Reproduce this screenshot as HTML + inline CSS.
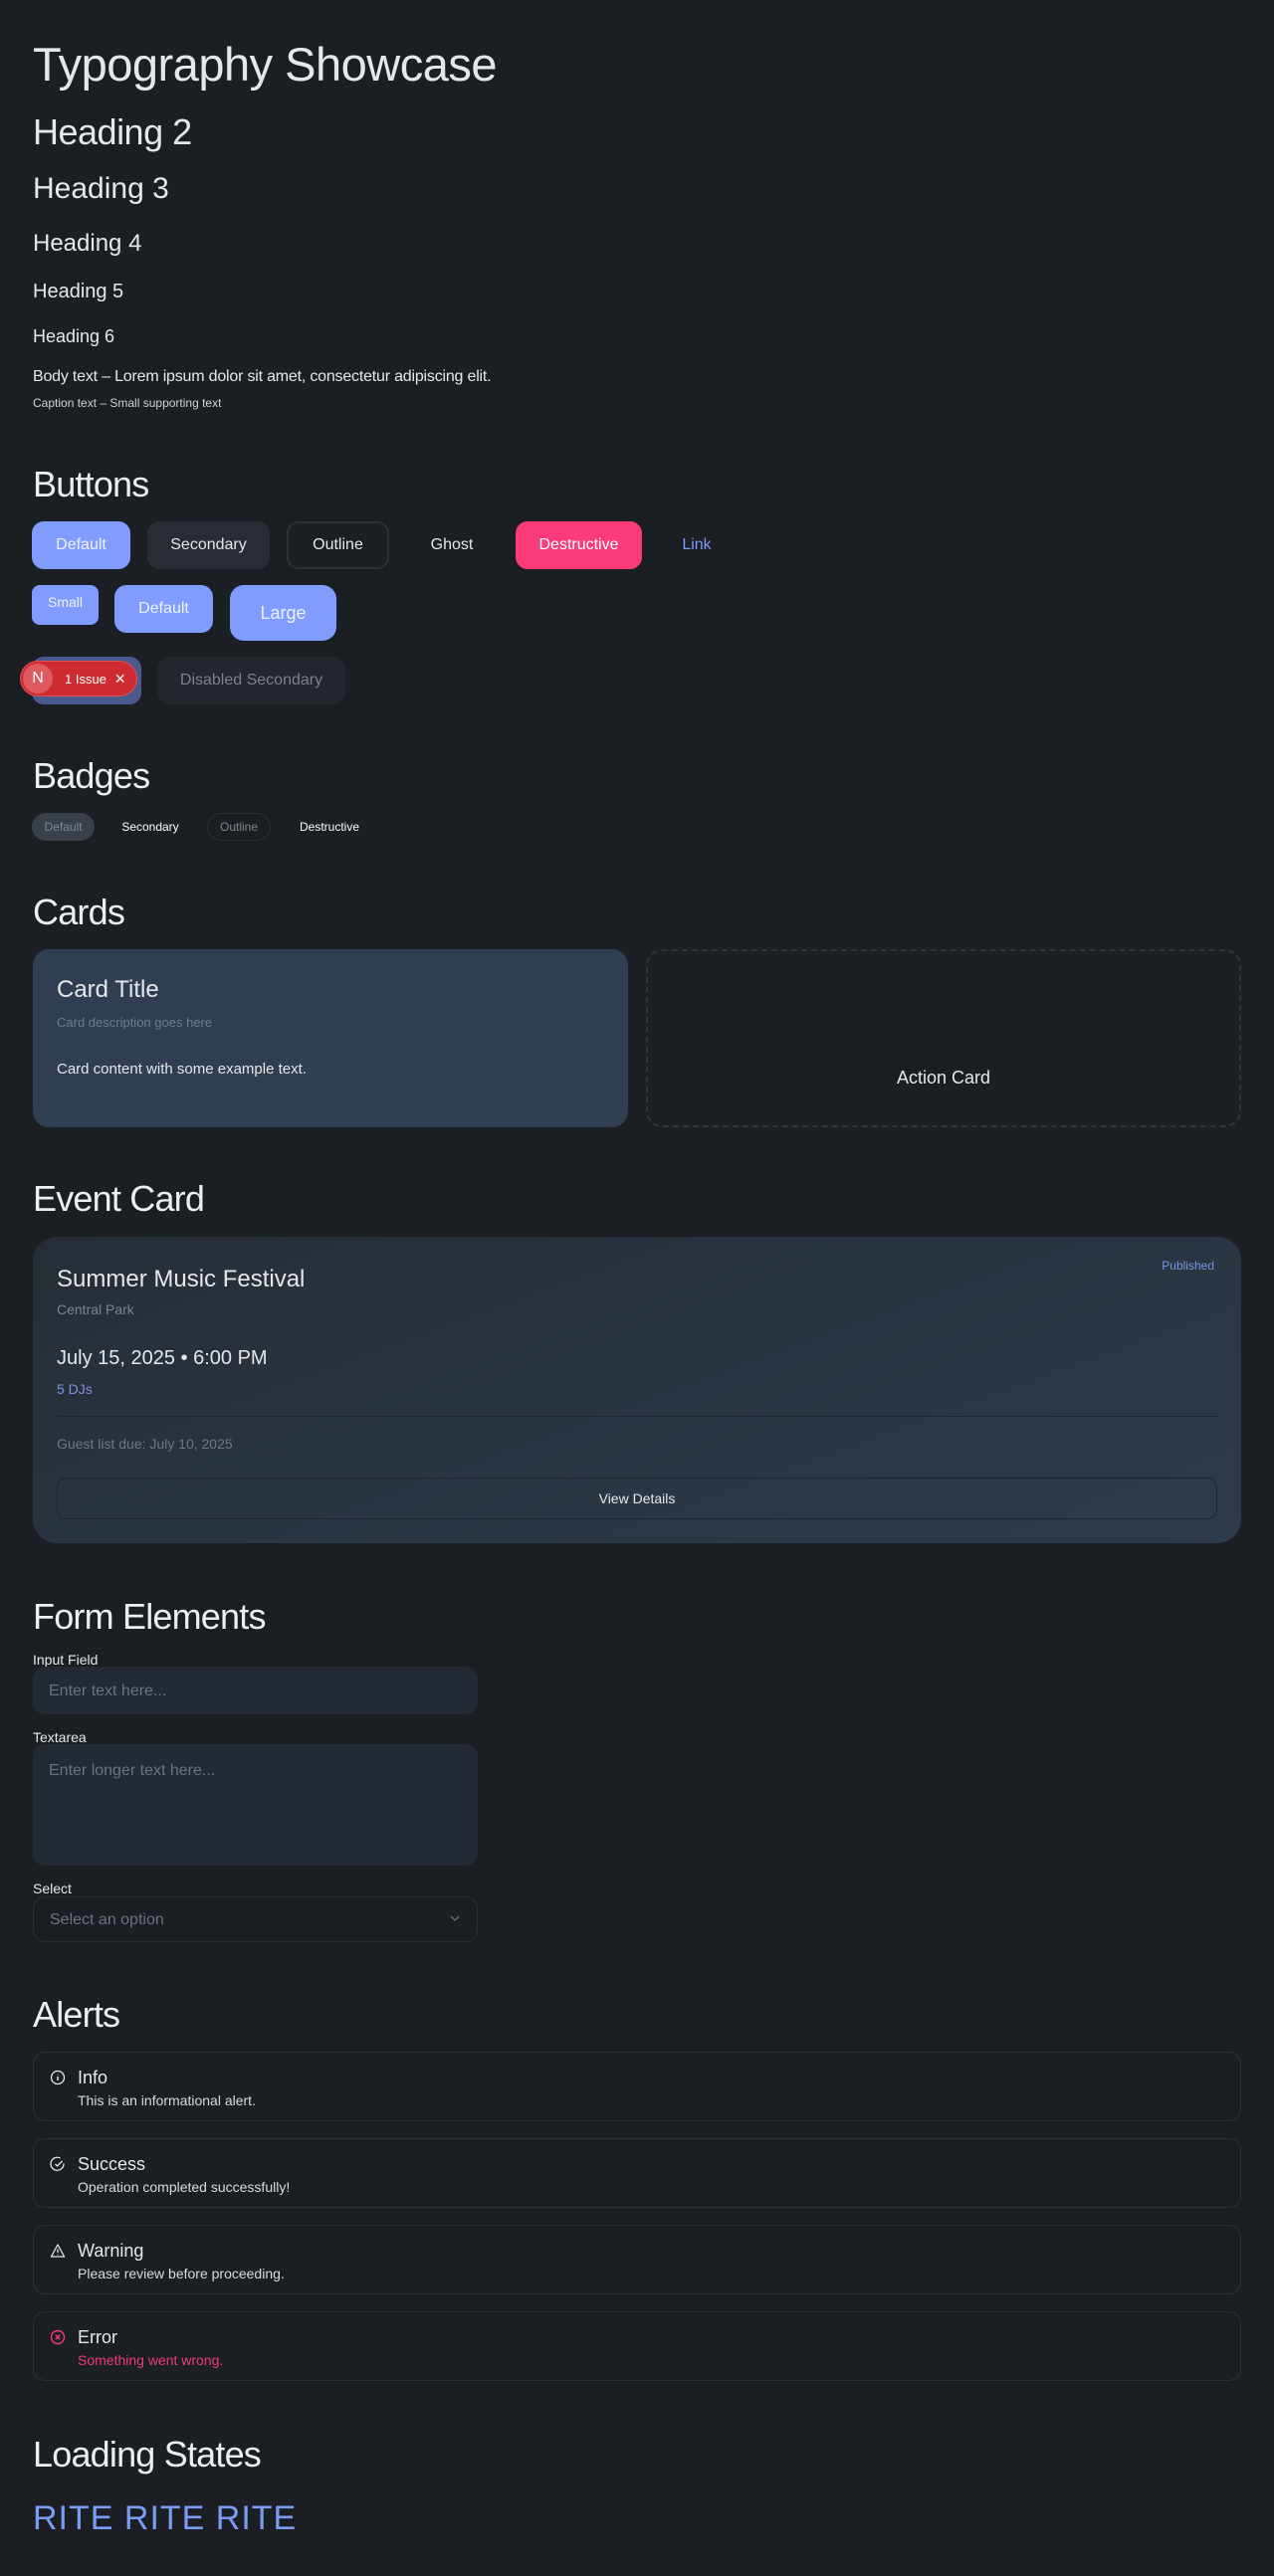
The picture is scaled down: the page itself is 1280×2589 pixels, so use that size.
<!DOCTYPE html>
<html><head><meta charset="utf-8">
<style>
*{margin:0;padding:0;box-sizing:border-box}
body{width:1280px;height:2589px;background:#1b1f23;color:#e5e7eb;font-family:"Liberation Sans",sans-serif;position:relative;overflow:hidden}
.a{position:absolute;line-height:1;white-space:nowrap}
.h{font-size:36px;left:33px;color:#eceef0;letter-spacing:-0.8px}
.btn{position:absolute;display:flex;align-items:center;justify-content:center;border-radius:12px;font-size:16px;line-height:1}
.badge{position:absolute;top:817px;height:28px;display:flex;align-items:center;justify-content:center;border-radius:14px;font-size:12px}
.alert{position:absolute;left:33px;width:1214px;height:70px;border:1px solid #2b3139;border-radius:12px}
.alert .t{position:absolute;left:44px;top:16px;font-size:18px;line-height:1}
.alert .d{position:absolute;left:44px;top:41px;font-size:14px;line-height:1;color:#d8dbe0}
.alert svg{position:absolute;left:16px;top:17px}
.lbl{position:absolute;left:33px;font-size:14px;line-height:1}
</style></head><body>
<div class="a" style="left:33px;top:41px;font-size:47px;letter-spacing:-0.5px">Typography Showcase</div>
<div class="a" style="left:33px;top:115px;font-size:36px;letter-spacing:-0.5px">Heading 2</div>
<div class="a" style="left:33px;top:175px;font-size:30px">Heading 3</div>
<div class="a" style="left:33px;top:233px;font-size:24px">Heading 4</div>
<div class="a" style="left:33px;top:283px;font-size:20px">Heading 5</div>
<div class="a" style="left:33px;top:329px;font-size:18px">Heading 6</div>
<div class="a" style="left:33px;top:371px;font-size:16px;letter-spacing:-0.2px">Body text – Lorem ipsum dolor sit amet, consectetur adipiscing elit.</div>
<div class="a" style="left:33px;top:399px;font-size:12px;color:#cfd3d8">Caption text – Small supporting text</div>

<div class="a h" style="top:469px">Buttons</div>
<div class="btn" style="left:32px;top:524px;width:99px;height:48px;background:#809cff;color:#eef2ff">Default</div>
<div class="btn" style="left:148px;top:524px;width:123px;height:48px;background:#282d35">Secondary</div>
<div class="btn" style="left:288px;top:524px;width:103px;height:48px;border:2px solid #2d3239">Outline</div>
<div class="btn" style="left:410px;top:524px;width:88px;height:48px">Ghost</div>
<div class="btn" style="left:518px;top:524px;width:127px;height:48px;background:#fb3a79;color:#fff">Destructive</div>
<div class="btn" style="left:670px;top:524px;width:60px;height:48px;color:#7c98f5">Link</div>
<div class="btn" style="left:32px;top:588px;width:67px;height:40px;background:#809cff;color:#eef2ff;font-size:14px;align-items:flex-start;padding-top:10px;border-radius:8px">Small</div>
<div class="btn" style="left:115px;top:588px;width:99px;height:48px;background:#809cff;color:#eef2ff">Default</div>
<div class="btn" style="left:231px;top:588px;width:107px;height:56px;background:#809cff;color:#eef2ff;font-size:18px;border-radius:14px">Large</div>
<div class="btn" style="left:32px;top:660px;width:110px;height:48px;background:#4a5a8c"></div>
<div class="btn" style="left:20px;top:664px;width:118px;height:36px;background:#cf2b33;border:1px solid #e05058;border-radius:18px;justify-content:flex-start;font-size:13px;color:#fff">
 <span style="width:30px;height:30px;margin-left:2px;border-radius:15px;background:#dd5a60;display:flex;align-items:center;justify-content:center;font-size:16px">N</span>
 <span style="margin-left:12px">1 Issue</span><span style="margin-left:8px;font-size:14px">✕</span></div>
<div class="btn" style="left:158px;top:660px;width:189px;height:48px;background:#22262d;color:#7d838c">Disabled Secondary</div>

<div class="a h" style="top:762px">Badges</div>
<div class="badge" style="left:32px;width:63px;background:#3a4049;color:#7f8690">Default</div>
<div class="badge" style="left:116px;width:70px;color:#fff">Secondary</div>
<div class="badge" style="left:208px;width:64px;border:1px solid #2b3139;color:#7f8690">Outline</div>
<div class="badge" style="left:292px;width:78px;color:#fff">Destructive</div>

<div class="a h" style="top:899px">Cards</div>
<div style="position:absolute;left:33px;top:954px;width:598px;height:179px;background:#2f3e50;border-radius:16px"></div>
<div class="a" style="left:57px;top:983px;font-size:24px">Card Title</div>
<div class="a" style="left:57px;top:1021px;font-size:13px;color:#6d7d90">Card description goes here</div>
<div class="a" style="left:57px;top:1067px;font-size:15px">Card content with some example text.</div>
<div style="position:absolute;left:649px;top:954px;width:598px;height:179px;border:2px dashed #2e343c;border-radius:16px"></div>
<div class="a" style="left:649px;width:598px;text-align:center;top:1074px;font-size:18px">Action Card</div>

<div class="a h" style="top:1187px">Event Card</div>
<div style="position:absolute;left:33px;top:1243px;width:1214px;height:308px;background:linear-gradient(160deg,#262d37,#2e3b4b);border-radius:24px"></div>
<div class="a" style="left:57px;top:1274px;font-size:24px">Summer Music Festival</div>
<div class="a" style="right:60px;top:1266px;font-size:12px;color:#7b93e6">Published</div>
<div class="a" style="left:57px;top:1309px;font-size:14px;color:#7c8592">Central Park</div>
<div class="a" style="left:57px;top:1355px;font-size:20px">July 15, 2025 • 6:00 PM</div>
<div class="a" style="left:57px;top:1389px;font-size:14px;color:#7b93e6">5 DJs</div>
<div style="position:absolute;left:57px;top:1423px;width:1167px;height:1px;background:#1f252d"></div>
<div class="a" style="left:57px;top:1444px;font-size:14px;color:#6f7986">Guest list due: July 10, 2025</div>
<div class="btn" style="left:57px;top:1485px;width:1166px;height:42px;border:1px solid #1f252d;font-size:14px;border-radius:10px">View Details</div>

<div class="a h" style="top:1607px">Form Elements</div>
<div class="lbl" style="top:1661px">Input Field</div>
<div style="position:absolute;left:33px;top:1675px;width:447px;height:48px;background:#242a33;border-radius:12px;font-size:16px;color:#6b7280;padding:17px 0 0 16px;line-height:1">Enter text here...</div>
<div class="lbl" style="top:1739px">Textarea</div>
<div style="position:absolute;left:33px;top:1753px;width:447px;height:122px;background:#242a33;border-radius:12px;font-size:16px;color:#6b7280;padding:19px 0 0 16px;line-height:1">Enter longer text here...</div>
<div class="lbl" style="top:1891px">Select</div>
<div style="position:absolute;left:33px;top:1906px;width:447px;height:46px;border:1px solid #2a3038;border-radius:12px;font-size:16px;color:#6b7280;padding:15px 0 0 16px;line-height:1">Select an option
<svg style="position:absolute;right:17px;top:18px" width="10" height="7" viewBox="0 0 10 7"><path d="M1 1l4 4 4-4" fill="none" stroke="#6b7280" stroke-width="1.3"/></svg></div>

<div class="a h" style="top:2007px">Alerts</div>
<div class="alert" style="top:2062px"><svg width="16" height="16" viewBox="0 0 16 16"><circle cx="8" cy="8" r="6.5" fill="none" stroke="#e5e7eb" stroke-width="1.3"/><path d="M8 7v4M8 5v.5" stroke="#e5e7eb" stroke-width="1.4"/></svg><div class="t">Info</div><div class="d">This is an informational alert.</div></div>
<div class="alert" style="top:2149px"><svg width="16" height="16" viewBox="0 0 16 16"><path d="M14 7.5A6.5 6.5 0 1 1 10.5 2" fill="none" stroke="#e5e7eb" stroke-width="1.3"/><path d="M5.5 8l2 2 5-5" fill="none" stroke="#e5e7eb" stroke-width="1.3"/></svg><div class="t">Success</div><div class="d">Operation completed successfully!</div></div>
<div class="alert" style="top:2236px"><svg width="16" height="16" viewBox="0 0 16 16"><path d="M8 2L14.5 14H1.5Z" fill="none" stroke="#e5e7eb" stroke-width="1.3" stroke-linejoin="round"/><path d="M8 6.5v3.5M8 11.5v.6" stroke="#e5e7eb" stroke-width="1.3"/></svg><div class="t">Warning</div><div class="d">Please review before proceeding.</div></div>
<div class="alert" style="top:2323px"><svg width="16" height="16" viewBox="0 0 16 16"><circle cx="8" cy="8" r="6.5" fill="none" stroke="#fb3a79" stroke-width="1.4"/><path d="M5.8 5.8l4.4 4.4M10.2 5.8l-4.4 4.4" stroke="#fb3a79" stroke-width="1.4"/></svg><div class="t">Error</div><div class="d" style="color:#f03a78">Something went wrong.</div></div>

<div class="a h" style="top:2449px">Loading States</div>
<div class="a" style="left:33px;top:2514px;font-size:34px;color:#7b9cf5;letter-spacing:1px">RITE RITE RITE</div>
</body></html>
